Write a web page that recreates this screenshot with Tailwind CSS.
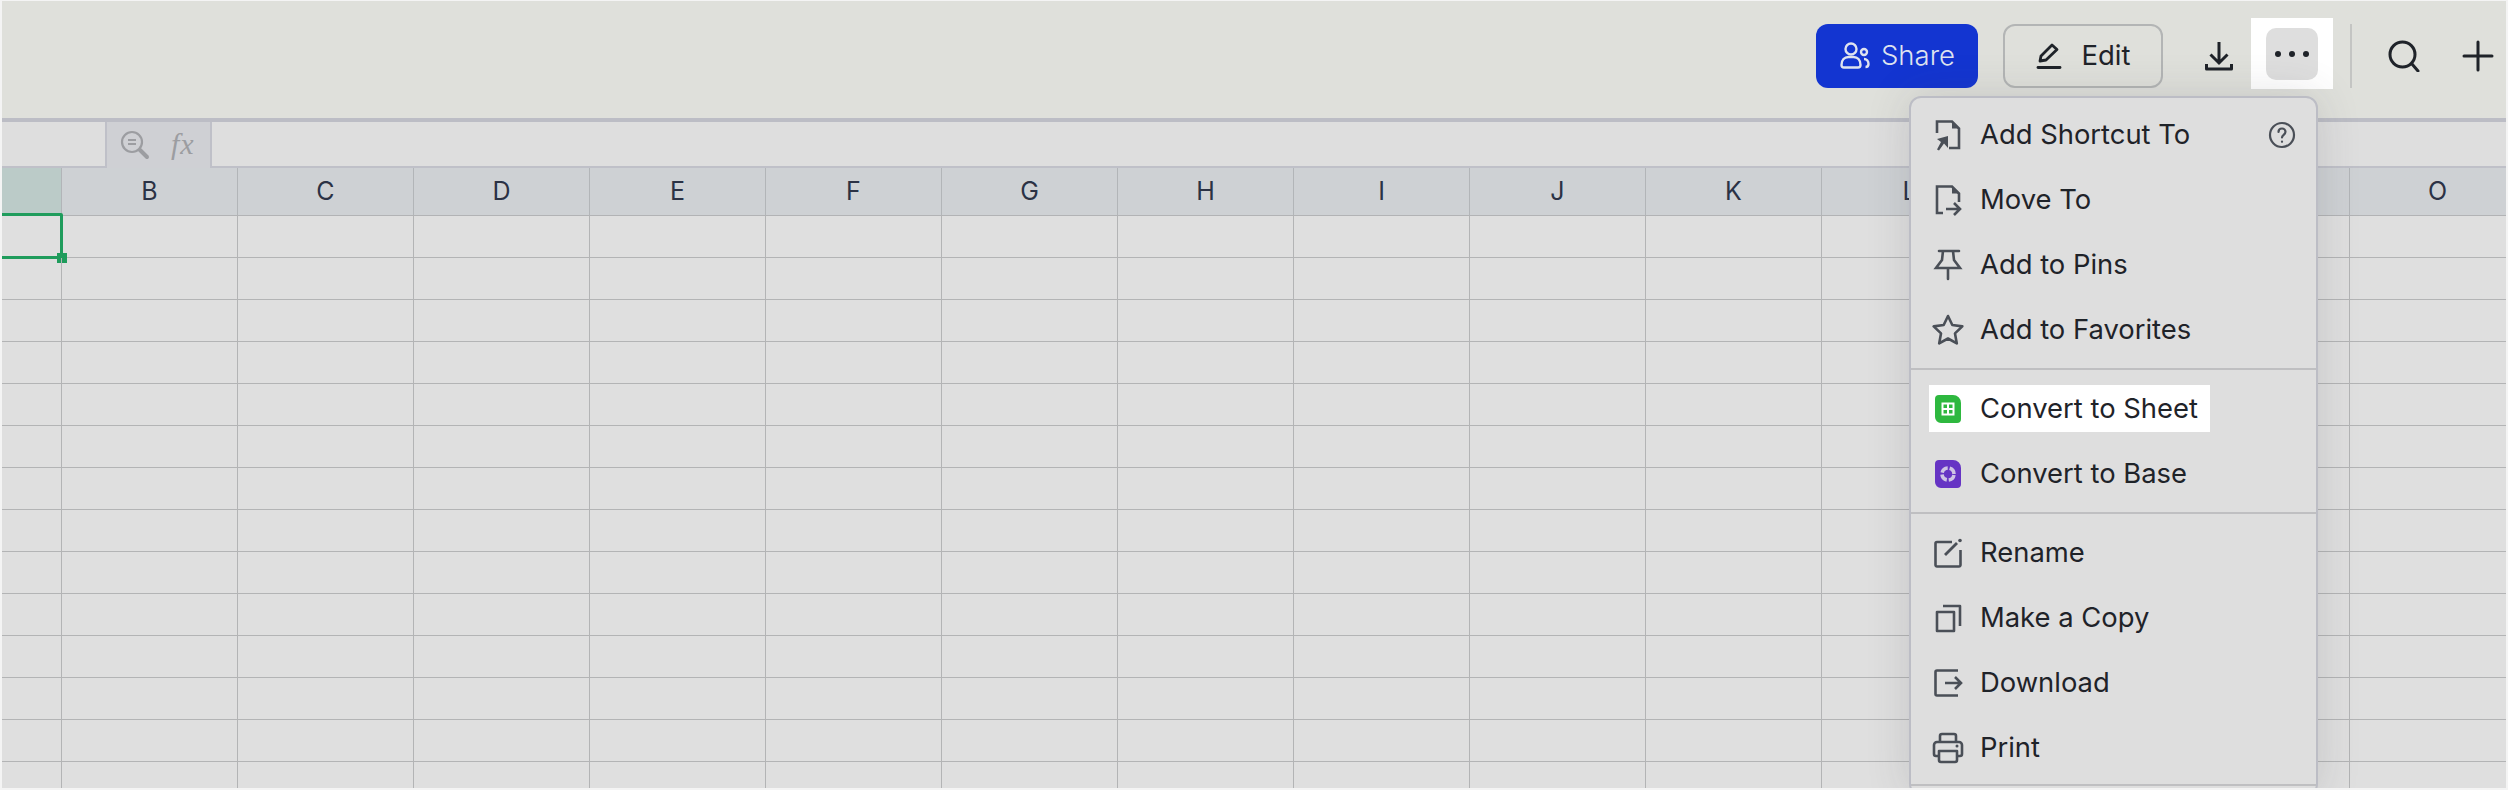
<!DOCTYPE html>
<html lang="en">
<head>
    <meta charset="UTF-8">
    <title>Sheet menu</title>
    <script src="https://cdn.jsdelivr.net/npm/@tailwindcss/browser@4"></script>
</head>
<body class="bg-[#f4f4f4] overflow-hidden font-['Inter','Noto_Sans',sans-serif]">
<div class="relative w-[2508px] h-[790px] pt-px px-[2px] pb-[2px] overflow-hidden">
    <div class="relative h-[787px] overflow-hidden bg-[#dfdfdf]">

        <!-- top bar -->
        <header class="flex items-center justify-end h-[117px] pb-[7px] pr-[12px] bg-[#dfe0db]">
            <button class="flex items-center justify-center gap-[10px] w-[162px] h-[64px] rounded-[12px] bg-[#1335d1] text-[27.500px] font-light text-[#dfe3ef]">
                <svg class="w-[32px] h-[32px]" viewBox="0 0 32 32" fill="none" stroke="currentColor" stroke-width="2.4">
                    <circle cx="12" cy="9" r="5.5"/>
                    <path d="M2.500 25c0-5 3-8 7-8h5c4 0 7 3 7 8 0 1.500-1 2.500-2.500 2.500h-14c-1.500 0-2.500-1-2.500-2.500z"/>
                    <circle cx="25" cy="12" r="3"/>
                    <path d="M25 19c2.500 0 4.500 2 4.500 5 0 2-1 3-3 3"/>
                </svg>
                <span>Share</span>
            </button>
            <button class="flex items-center justify-center gap-[18px] ml-[25px] w-[160px] h-[64px] rounded-[12px] border-2 border-[#b3b5b5] text-[27.500px] text-[#1f2329]">
                <svg class="w-[28px] h-[28px]" viewBox="0 0 28 28" fill="none" stroke="currentColor" stroke-width="2.800" stroke-linejoin="round">
                    <path d="M5 19l1-5L17 3l5 4.500L11 18z"/>
                    <path d="M3 25.500h22" stroke-linecap="round"/>
                </svg>
                <span>Edit</span>
            </button>
            <svg class="ml-[40px] w-[32px] h-[32px] text-[#1f2329]" viewBox="0 0 32 32" fill="none" stroke="currentColor" stroke-width="3">
                <path d="M16 2v20M7.500 14.500L16 23l8.500-8.500"/>
                <path d="M3.500 24v5h25v-5" stroke-linejoin="round"/>
            </svg>
            <div class="flex items-center justify-center ml-[16px] -mt-[5px] w-[82px] h-[71px] bg-white">
                <div class="flex items-center justify-center gap-[8px] w-[52px] h-[52px] rounded-[10px] bg-[#dedede]">
                    <span class="w-[6px] h-[6px] rounded-full bg-[#1f2329]"></span>
                    <span class="w-[6px] h-[6px] rounded-full bg-[#1f2329]"></span>
                    <span class="w-[6px] h-[6px] rounded-full bg-[#1f2329]"></span>
                </div>
            </div>
            <div class="ml-[17px] w-[2px] h-[64px] bg-[#c4c5c3]"></div>
            <svg class="ml-[36px] w-[32px] h-[32px] text-[#1f2329]" viewBox="0 0 32 32" fill="none" stroke="currentColor" stroke-width="3" stroke-linecap="round">
                <circle cx="14.500" cy="14.500" r="12.500"/>
                <path d="M24 24l6 7"/>
            </svg>
            <svg class="ml-[42px] w-[32px] h-[32px] text-[#1f2329]" viewBox="0 0 32 32" fill="none" stroke="currentColor" stroke-width="3" stroke-linecap="round">
                <path d="M16 2v28M2 16h28"/>
            </svg>
        </header>
        <div class="h-[4px] bg-[#bcbdc5]"></div>

        <!-- formula bar -->
        <div class="flex h-[46px] border-b-2 border-[#bfc0c8]">
            <div class="w-[103px] bg-[#dedede]"></div>
            <div class="flex items-center w-[107px] h-[46px] pl-[13px] gap-[21px] bg-[#cfd0d4] border-x-2 border-[#bfc0c8]">
                <svg class="w-[30px] h-[30px] text-[#9c9da1]" viewBox="0 0 30 30" fill="none" stroke="currentColor">
                    <circle cx="12" cy="12" r="10" stroke-width="2.2"/>
                    <path d="M8 10h8M8 14h8" stroke-width="2"/>
                    <path d="M20 20l7 7" stroke-width="4" stroke-linecap="round"/>
                </svg>
                <span class="-mt-[3px] font-['Liberation_Serif','DejaVu_Serif',serif] italic text-[30px] leading-none tracking-[1px] text-[#9c9da1]">fx</span>
            </div>
            <div class="flex-1 bg-[#dedede]"></div>
        </div>

        <!-- sheet -->
        <div id="colHead" class="flex h-[48px] bg-[#ced1d4] text-[25px] text-[#2b3245] border-b border-[#b2b3b5]">
            <div class="w-[60px] shrink-0 bg-[#bbcbc8] border-r border-[#b2b5b8]"></div>
        </div>
        <div id="rows"></div>

        <!-- more menu -->
        <div class="absolute left-[1907px] top-[95px] w-[409px] h-[700px] pt-[4px] rounded-[12px] border-2 border-[#bcbdc5] bg-[#dedede] text-[27.4px] text-[#1f2329] shadow-[0_0_44px_rgba(60,60,70,0.16)]">
            <div class="flex items-center h-[65px] pl-[21px] pr-[20px]">
                <svg class="w-[32px] h-[32px] text-[#4a4f57]" viewBox="0 0 32 32" fill="none" stroke="currentColor" stroke-width="2.6">
                    <path d="M5 14V2.500h15l7 7V29H17"/>
                    <path d="M20 2l7.500 7.500H20z" fill="currentColor" stroke="none"/>
                    <path d="M16 17v12l-4-4.500-5 7-2-1 4-7.500-4-3z" fill="currentColor" stroke="none"/>
                </svg>
                <span class="ml-[16px] flex-1">Add Shortcut To</span>
                <svg class="w-[28px] h-[28px] text-[#4a4f57]" viewBox="0 0 28 28" fill="none" stroke="currentColor" stroke-width="2.200" stroke-linecap="round">
                    <circle cx="14" cy="14" r="12"/>
                    <path d="M10.500 11c0-2 1.500-3.500 3.500-3.500s3.500 1.500 3.500 3.300c0 3-3.500 3-3.500 5.700"/>
                    <path d="M14 20.500v.3"/>
                </svg>
            </div>
            <div class="flex items-center h-[65px] pl-[21px]">
                <svg class="w-[32px] h-[32px] text-[#4a4f57]" viewBox="0 0 32 32" fill="none" stroke="currentColor" stroke-width="2.6">
                    <path d="M11 29H5V2.500h15l7 7V18"/>
                    <path d="M20 2l7.500 7.500H20z" fill="currentColor" stroke="none"/>
                    <path d="M14 25h14M22 19l6 6-6 6"/>
                </svg>
                <span class="ml-[16px]">Move To</span>
            </div>
            <div class="flex items-center h-[65px] pl-[21px]">
                <svg class="w-[32px] h-[32px] text-[#4a4f57]" viewBox="0 0 32 32" fill="none" stroke="currentColor" stroke-width="2.6" stroke-linecap="round">
                    <path d="M7 2h20M11 2l-1 9-6 8h24l-6-8-1-9M16 19v11"/>
                </svg>
                <span class="ml-[16px]">Add to Pins</span>
            </div>
            <div class="flex items-center h-[65px] pl-[21px]">
                <svg class="w-[32px] h-[32px] text-[#4a4f57]" viewBox="0 0 32 32" fill="none" stroke="currentColor" stroke-width="2.6" stroke-linejoin="round">
                    <path d="M16 2l4.300 9 10 1.400-7.300 7 1.800 10L16 24.500 7.200 29.400 9 19.400l-7.300-7 10-1.400z"/>
                </svg>
                <span class="ml-[16px]">Add to Favorites</span>
            </div>
            <div class="mt-[6px] mb-[6px] h-[2px] bg-[#bfbfc1]"></div>
            <div class="flex items-center h-[65px] pl-[21px]">
                <div class="flex items-center h-[47px] w-[281px] -ml-[3px] pl-[3px] bg-white">
                    <svg class="w-[32px] h-[32px]" viewBox="0 0 32 32">
                        <path d="M7 2h14a8 8 0 0 1 8 8v16a4 4 0 0 1-4 4H9a6 6 0 0 1-6-6V6a4 4 0 0 1 4-4z" fill="#2eb83f"/>
                        <path d="M9.500 9.500h13v13h-13z" fill="#fff"/>
                        <path d="M11.500 11.500h3.500v3.500h-3.500zM17 11.500h3.500v3.500H17zM11.500 17h3.500v3.500h-3.500zM17 17h3.500v3.500H17z" fill="#2eb83f"/>
                    </svg>
                    <span class="ml-[16px]">Convert to Sheet</span>
                </div>
            </div>
            <div class="flex items-center h-[65px] pl-[21px]">
                <svg class="w-[32px] h-[32px]" viewBox="0 0 32 32">
                    <path d="M7 2h14a8 8 0 0 1 8 8v16a4 4 0 0 1-4 4H9a6 6 0 0 1-6-6V6a4 4 0 0 1 4-4z" fill="#6634c4"/>
                    <circle cx="16" cy="16" r="6" fill="none" stroke="#cfc4e4" stroke-width="3.600" stroke-dasharray="7.400 2.020" stroke-dashoffset="-1"/>
                </svg>
                <span class="ml-[16px]">Convert to Base</span>
            </div>
            <div class="mt-[6px] mb-[6px] h-[2px] bg-[#bfbfc1]"></div>
            <div class="flex items-center h-[65px] pl-[21px]">
                <svg class="w-[32px] h-[32px] text-[#4a4f57]" viewBox="0 0 32 32" fill="none" stroke="currentColor" stroke-width="2.6">
                    <path d="M20 5H5a1.500 1.500 0 0 0-1.500 1.500V28A1.500 1.500 0 0 0 5 29.500h22a1.500 1.500 0 0 0 1.500-1.500V13"/>
                    <path d="M13 18L25 6" stroke-width="2.800"/>
                    <circle cx="28" cy="3.500" r="1.800" fill="currentColor" stroke="none"/>
                </svg>
                <span class="ml-[16px]">Rename</span>
            </div>
            <div class="flex items-center h-[65px] pl-[21px]">
                <svg class="w-[32px] h-[32px] text-[#4a4f57]" viewBox="0 0 32 32" fill="none" stroke="currentColor" stroke-width="2.6" stroke-linejoin="round">
                    <path d="M5 10h17v19H5z"/>
                    <path d="M11 4h17v20"/>
                </svg>
                <span class="ml-[16px]">Make a Copy</span>
            </div>
            <div class="flex items-center h-[65px] pl-[21px]">
                <svg class="w-[32px] h-[32px] text-[#4a4f57]" viewBox="0 0 32 32" fill="none" stroke="currentColor" stroke-width="2.6">
                    <path d="M26 3.500H5A1.500 1.500 0 0 0 3.500 5v22A1.500 1.500 0 0 0 5 28.500h21"/>
                    <path d="M13 16h16M23 10l6 6-6 6"/>
                </svg>
                <span class="ml-[16px]">Download</span>
            </div>
            <div class="flex items-center h-[65px] pl-[21px]">
                <svg class="w-[32px] h-[32px] text-[#4a4f57]" viewBox="0 0 32 32" fill="none" stroke="currentColor" stroke-width="2.6" stroke-linejoin="round">
                    <path d="M8 10V4a2 2 0 0 1 2-2h12a2 2 0 0 1 2 2v6"/>
                    <path d="M7 24H4a2 2 0 0 1-2-2v-9a3 3 0 0 1 3-3h22a3 3 0 0 1 3 3v9a2 2 0 0 1-2 2h-3"/>
                    <path d="M7 19h18v9a2 2 0 0 1-2 2H9a2 2 0 0 1-2-2z"/>
                    <circle cx="25" cy="14" r="1.500" fill="currentColor" stroke="none"/>
                </svg>
                <span class="ml-[16px]">Print</span>
            </div>
            <div class="mt-[4px] h-[2px] bg-[#bfbfc1]"></div>
        </div>
    </div>
</div>

<script>
    const letters = 'BCDEFGHIJKLMNO'.split('');
    const colHead = document.getElementById('colHead');
    const rows = document.getElementById('rows');

    // column headers
    letters.forEach(letter => {
        const cell = document.createElement('div');
        cell.className = 'flex items-center justify-center w-[176px] shrink-0 border-r border-[#b2b5b8]';
        cell.textContent = letter;
        colHead.appendChild(cell);
    });

    // grid rows, first cell of the first row is the selected one
    for (let r = 0; r < 14; r++) {
        const row = document.createElement('div');
        row.className = 'flex h-[42px] border-b border-[#b3b4b5]';
        const first = document.createElement('div');
        first.className = 'relative w-[60px] shrink-0 border-r border-[#b3b4b5]';
        if (r === 0) {
            first.innerHTML = `
                <div class="absolute -left-[4px] -top-[3px] w-[65px] h-[46px] rounded-tr-[2px] border-[3px] border-[#1f9c5c]"></div>
                <div class="absolute left-[55px] top-[37px] w-[10px] h-[10px] bg-[#1f9c5c]"></div>`;
        }
        row.appendChild(first);
        letters.forEach(() => {
            const cell = document.createElement('div');
            cell.className = 'w-[176px] shrink-0 border-r border-[#b3b4b5]';
            row.appendChild(cell);
        });
        rows.appendChild(row);
    }
</script>
</body>
</html>
